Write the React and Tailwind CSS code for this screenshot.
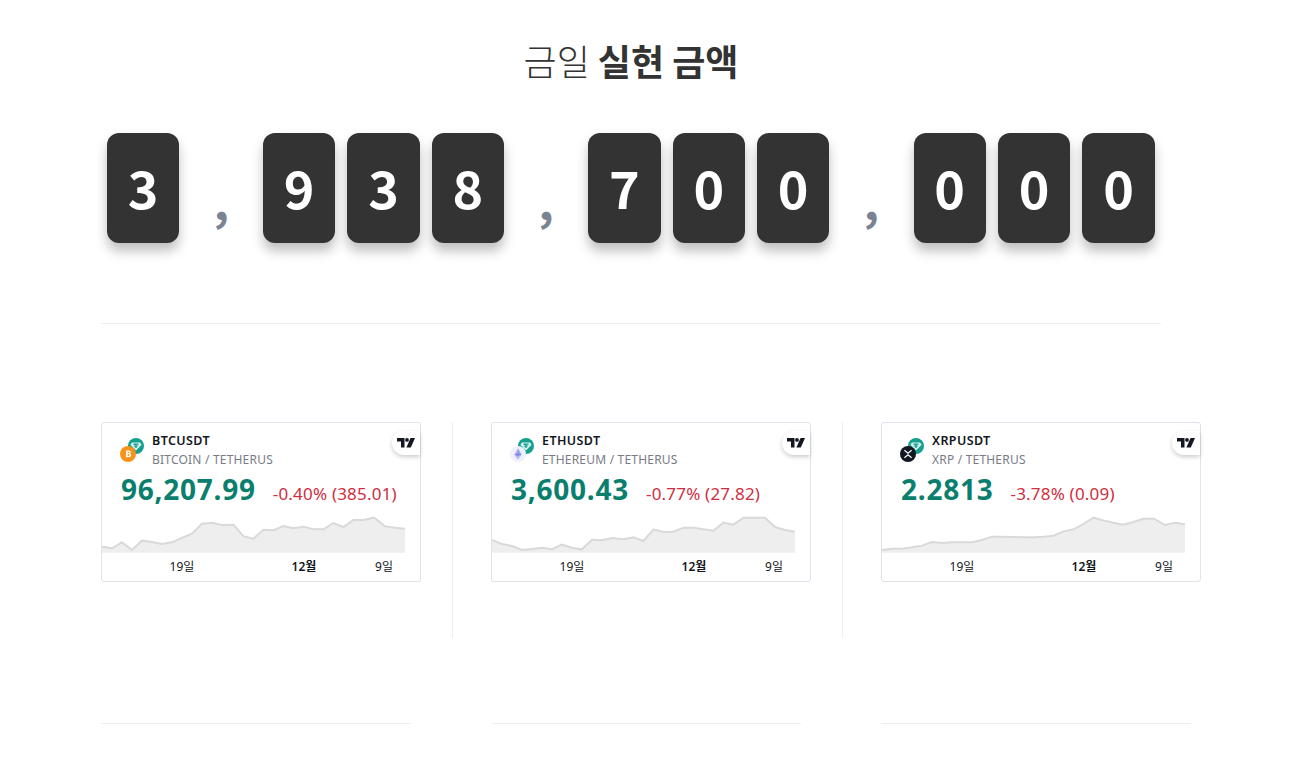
import React from 'react';

const digits = ['3', ',', '9', '3', '8', ',', '7', '0', '0', ',', '0', '0', '0'];

const cards = [
  {
    symbol: 'BTCUSDT',
    name: 'BITCOIN',
    price: '96,207.99',
    change: '-0.40%',
    diff: '(385.01)',
    points: '5,380 35,385 65,367 95,390 125,362 155,366 185,372 215,367 245,354 275,341 305,311 335,308 365,315 400,314 430,349 460,356 490,329 520,331 550,318 580,325 610,320 640,328 670,328 700,309 730,321 760,300 790,300 822,293 855,319 885,323 915,326',
    coin: 'btc',
  },
  {
    symbol: 'ETHUSDT',
    name: 'ETHEREUM',
    price: '3,600.43',
    change: '-0.77%',
    diff: '(27.82)',
    points: '5,360 35,372 65,378 95,390 125,387 155,383 185,388 215,374 245,383 275,388 305,359 335,361 365,354 400,358 430,352 460,363 490,328 520,336 550,335 580,323 610,323 640,328 670,332 700,308 730,314 760,293 790,293 825,293 855,321 885,330 915,335',
    coin: 'eth',
  },
  {
    symbol: 'XRPUSDT',
    name: 'XRP',
    price: '2.2813',
    change: '-3.78%',
    diff: '(0.09)',
    points: '5,390 35,386 65,386 95,382 125,377 155,366 185,369 215,367 245,367 275,367 305,360 335,350 365,350 400,351 430,352 460,352 490,350 520,347 550,334 580,328 610,312 640,293 670,301 700,308 730,314 760,306 790,296 822,296 855,315 885,308 915,313',
    coin: 'xrp',
  },
];

const TetherIcon = () => (
  <svg className="absolute left-2 top-0" width="16" height="16" viewBox="0 0 16 16">
    <circle cx="8" cy="8" r="8" fill="#159f8f" />
    <path d="M4 4.6h8l1.6 2.2L8 12.4 2.4 6.8z" fill="#d9f4ef" />
    <path d="M5.5 5.6h5v1.1H8.7v.7l1.7.3v.5l-1.7.3v1.6H7.3V8.7l-1.7-.3v-.5l1.7-.3v-.7H5.5z" fill="#159f8f" />
  </svg>
);

const CoinIcon = ({ coin }) => {
  if (coin === 'btc') {
    return (
      <svg className="absolute left-0 top-2" width="16" height="16" viewBox="0 0 16 16">
        <circle cx="8" cy="8" r="8" fill="#f7931a" />
        <path d="M6 4.4h2.8c1.3 0 2 .7 2 1.7 0 .7-.4 1.2-1 1.5.8.2 1.3.8 1.3 1.6 0 1.2-.9 2-2.3 2H6zm1.6 1.3v1.4h1c.5 0 .7-.3.7-.7s-.3-.7-.7-.7zm0 2.6v1.6h1.1c.6 0 .9-.3.9-.8s-.3-.8-.9-.8z" fill="#fff" />
      </svg>
    );
  }
  if (coin === 'eth') {
    return (
      <svg className="absolute left-0 top-2" width="16" height="16" viewBox="0 0 16 16">
        <circle cx="8" cy="8" r="8" fill="#eef0fb" />
        <path d="M8 2.2v4.6l3.6 1.6z" fill="#8fa4ee" />
        <path d="M8 2.2v4.6L4.4 8.4z" fill="#b9a7ef" />
        <path d="M8 9.8v4l3.6-5z" fill="#a5c8f5" />
        <path d="M8 9.8v4l-3.6-5z" fill="#c3b2f2" />
        <path d="M8 6.8l3.6 1.6L8 10.3 4.4 8.4z" fill="#7d86e0" />
      </svg>
    );
  }
  return (
    <svg className="absolute left-0 top-2" width="16" height="16" viewBox="0 0 16 16">
      <circle cx="8" cy="8" r="8" fill="#131722" />
      <path d="M4.4 4.2l3.6 3 3.6-3M4.4 11.8l3.6-3 3.6 3" fill="none" stroke="#fff" strokeWidth="1.2" />
    </svg>
  );
};

const TvBadge = () => (
  <div className="absolute right-0 top-2 flex h-6 w-7 items-center justify-center rounded-l-xl bg-white shadow-[0_2px_4px_rgba(0,0,0,0.2)]">
    <svg width="18" height="10" viewBox="0 0 18 10">
      <path d="M0 0h7.5v9.4H4V3.6H0z" fill="#131722" />
      <circle cx="10" cy="1.9" r="1.9" fill="#131722" />
      <path d="M13.6 0H18l-4.2 9.4H9.4z" fill="#131722" />
    </svg>
  </div>
);

const Sparkline = ({ points }) => (
  <svg className="mt-[8px] block" width="303" height="38" viewBox="5 285 910 114">
    <polygon points={`5,398 ${points} 915,398`} fill="#eeeeee" />
    <polyline points={points} fill="none" stroke="#d9d9d9" strokeWidth="6" />
  </svg>
);

const Card = ({ card }) => (
  <div className="relative h-40 w-80 rounded-[3px] border border-[#e0e3eb] bg-white font-['Noto_Sans',sans-serif]">
    <TvBadge />
    <div className="flex pl-[18px] pt-[7px]">
      <div className="relative mt-2 h-6 w-6">
        <TetherIcon />
        <CoinIcon coin={card.coin} />
      </div>
      <div className="ml-[8px] mt-[1px]">
        <div className="text-[12.5px] leading-[20px] font-semibold tracking-[0.4px] text-[#131722]">{card.symbol}</div>
        <div className="text-xs leading-[17px] tracking-[0.2px] text-[#787b86]">{card.name} / TETHERUS</div>
      </div>
    </div>
    <div className="mt-[3px] flex h-[36px] items-baseline pl-[19px]">
      <span className="text-[28px] leading-[36px] font-bold tracking-[0.75px] text-[#0a7f6e]">{card.price}</span>
      <span className="ml-[17px] text-[17px] tracking-[0.2px] text-[#cf2e3e]">{card.change} {card.diff}</span>
    </div>
    <Sparkline points={card.points} />
    <div className="flex h-7 items-center whitespace-nowrap text-xs text-[#131722] font-['Noto_Sans','Noto_Sans_CJK_KR',sans-serif]">
      <span className="ml-[64px] w-8 text-center">19일</span>
      <span className="ml-[92px] w-7 text-center font-semibold">12월</span>
      <span className="ml-[56px] w-5 text-center">9일</span>
    </div>
  </div>
);

const commaWidth = (i) => {
  if (i === 1) return 'w-[71.6px]';
  if (i === 5) return 'w-[72px]';
  return 'w-[72.2px]';
};

const App = () => (
  <div className="min-h-screen overflow-hidden bg-white pl-[101px] pt-[32px]">
    <div className="w-[1060px] border-b border-[#eeeeee] pb-20">
      <h2 className="text-center text-[36px] leading-[56px] font-light text-[#333333] font-['Noto_Sans_CJK_KR','Noto_Sans',sans-serif]">
        금일 <strong className="font-bold">실현 금액</strong>
      </h2>
      <div className="mt-[45px] flex font-['Noto_Sans_CJK_KR','Noto_Sans',sans-serif]">
        {digits.map((d, i) =>
          d === ',' ? (
            <div
              key={i}
              className={`${commaWidth(i)} flex h-[110px] items-center justify-center pt-[22px] text-[48px] leading-none font-bold text-[#7a8394]`}
            >
              ,
            </div>
          ) : (
            <div key={i} className="mx-1.5 flex h-[110px] w-[72.4px] items-center justify-center rounded-xl bg-[#333333] pb-[3px] text-[52px] font-bold text-white shadow-[0_8px_12px_rgba(0,0,0,0.25)]">
              {d}
            </div>
          )
        )}
      </div>
    </div>
    <div className="mt-[98px] flex">
      {cards.map((card, i) => (
        <div key={card.symbol} className="w-[390px]">
          <div className={i < 2 ? 'h-[216px] w-[352px] border-r border-[#eeeeee]' : 'h-[216px] w-[352px]'}>
            <Card card={card} />
          </div>
        </div>
      ))}
    </div>
    <div className="mt-[85px] flex">
      {cards.map((card) => (
        <div key={card.symbol} className="w-[390px]">
          <div className="w-[310px] border-t border-[#eeeeee]" />
        </div>
      ))}
    </div>
  </div>
);

export default App;
